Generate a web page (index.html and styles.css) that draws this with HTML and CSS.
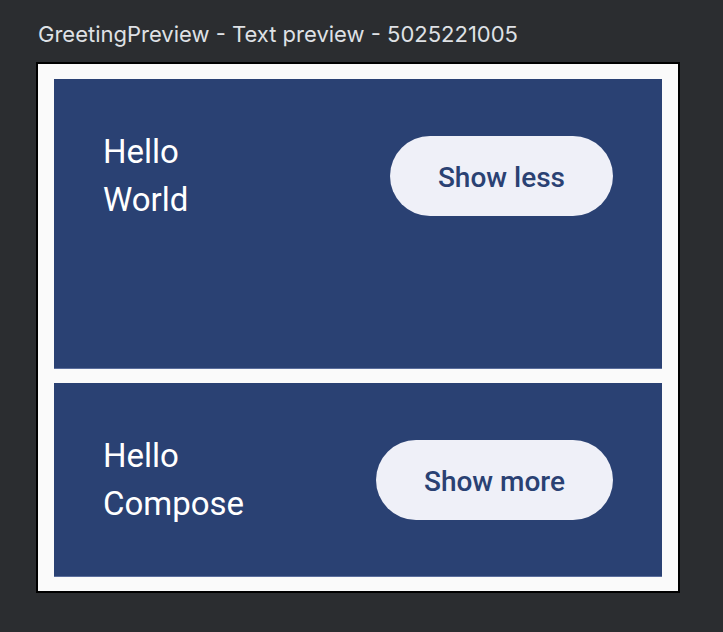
FILE: index.html
```html
<!DOCTYPE html>
<html lang="en">
<head>
    <meta charset="UTF-8">
    <meta name="viewport" content="width=device-width, initial-scale=1.0">
    <title>GreetingPreview</title>
    <link rel="stylesheet" href="styles.css">
</head>
<body>
    <div class="preview">
        <div class="preview-title">GreetingPreview - Text preview - 5025221005</div>
        <div class="frame">
            <div class="card expanded">
                <div class="greeting">
                    <div>Hello</div>
                    <div>World</div>
                </div>
                <button class="toggle">Show less</button>
            </div>
            <div class="card">
                <div class="greeting">
                    <div>Hello</div>
                    <div>Compose</div>
                </div>
                <button class="toggle">Show more</button>
            </div>
        </div>
    </div>
</body>
</html>
```

FILE: styles.css
```css
body {
    margin: 0;
    height: 100vh;
    background-color: #2b2d30;
    font-family: Roboto, "Liberation Sans", sans-serif;
}

.preview {
    padding: 17px 0 0 36px;
}

.preview-title {
    padding-left: 2px;
    font-family: Inter, "Noto Sans", sans-serif;
    font-size: 22px;
    line-height: 34px;
    color: #dfe1e5;
    margin-bottom: 11px;
}

.frame {
    width: 644px;
    height: 531px;
    box-sizing: border-box;
    border: 2px solid #000;
    background-color: #fafafa;
    padding: 15px 16px;
    display: flex;
    flex-direction: column;
    gap: 15px;
}

.card {
    display: flex;
    align-items: flex-start;
    height: 193px;
    box-sizing: border-box;
    padding: 48px 49px;
    background-color: #2a4173;
    box-shadow: 0 1px 0 #5b6e9c;
}

.card.expanded {
    height: 289px;
}

.greeting {
    flex: 1;
    padding-top: 1px;
    color: #fff;
    font-size: 33px;
    line-height: 48px;
}

.toggle {
    margin-top: 9px;
    height: 80px;
    padding: 2px 48px 0;
    border: none;
    border-radius: 40px;
    background-color: #eff0f8;
    color: #2a4173;
    font-family: Roboto, "Liberation Sans", sans-serif;
    font-size: 28px;
    font-weight: 500;
    cursor: pointer;
}
```
